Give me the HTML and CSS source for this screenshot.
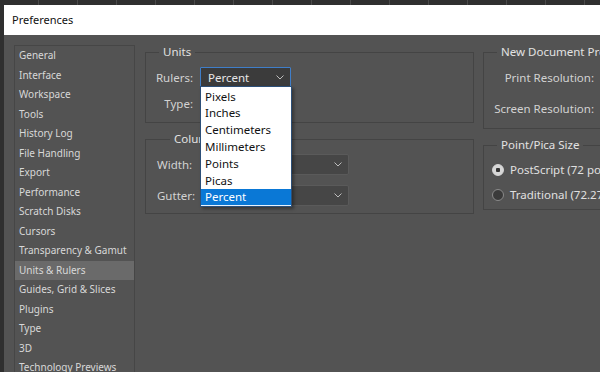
FILE: index.html
```html
<!DOCTYPE html>
<html lang="en">
<head>
  <meta charset="UTF-8">
  <title>Preferences</title>
  <link rel="stylesheet" href="styles.css">
</head>
<body>
  <div class="window">
    <div class="titlebar">Preferences</div>
    <div class="content">
      <ul class="sidebar">
        <li>General</li>
        <li>Interface</li>
        <li>Workspace</li>
        <li>Tools</li>
        <li>History Log</li>
        <li>File Handling</li>
        <li>Export</li>
        <li>Performance</li>
        <li>Scratch Disks</li>
        <li>Cursors</li>
        <li>Transparency &amp; Gamut</li>
        <li class="active">Units &amp; Rulers</li>
        <li>Guides, Grid &amp; Slices</li>
        <li>Plugins</li>
        <li>Type</li>
        <li>3D</li>
        <li>Technology Previews</li>
      </ul>

      <div class="main">
        <div class="col col-left">
          <fieldset class="group units">
            <legend>Units</legend>
            <div class="row">
              <label>Rulers:</label>
              <div class="select focus wide">
                <span>Percent</span>
                <svg class="chev" width="8" height="5" viewBox="0 0 8 5"><polyline points="0.5,0.5 4,4 7.5,0.5" fill="none" stroke="#bdbdbd" stroke-width="1"/></svg>
                <ul class="dropdown">
                  <li>Pixels</li>
                  <li>Inches</li>
                  <li>Centimeters</li>
                  <li>Millimeters</li>
                  <li>Points</li>
                  <li>Picas</li>
                  <li class="hl">Percent</li>
                </ul>
              </div>
            </div>
            <div class="row">
              <label>Type:</label>
              <div class="select wide">
                <span>Points</span>
                <svg class="chev" width="8" height="5" viewBox="0 0 8 5"><polyline points="0.5,0.5 4,4 7.5,0.5" fill="none" stroke="#bdbdbd" stroke-width="1"/></svg>
              </div>
            </div>
          </fieldset>

          <fieldset class="group columns">
            <legend>Column Size</legend>
            <div class="row">
              <label>Width:</label>
              <div class="input">180</div>
              <div class="select unit">
                <span>Points</span>
                <svg class="chev" width="8" height="5" viewBox="0 0 8 5"><polyline points="0.5,0.5 4,4 7.5,0.5" fill="none" stroke="#bdbdbd" stroke-width="1"/></svg>
              </div>
            </div>
            <div class="row">
              <label>Gutter:</label>
              <div class="input">12</div>
              <div class="select unit">
                <span>Points</span>
                <svg class="chev" width="8" height="5" viewBox="0 0 8 5"><polyline points="0.5,0.5 4,4 7.5,0.5" fill="none" stroke="#bdbdbd" stroke-width="1"/></svg>
              </div>
            </div>
          </fieldset>
        </div>

        <div class="col col-right">
          <fieldset class="group preset">
            <legend>New Document Preset Resolutions</legend>
            <div class="row">
              <label>Print Resolution:</label>
              <div class="input">300</div>
            </div>
            <div class="row">
              <label>Screen Resolution:</label>
              <div class="input">72</div>
            </div>
          </fieldset>

          <fieldset class="group pica">
            <legend>Point/Pica Size</legend>
            <div class="radio-row">
              <span class="radio checked"></span>
              <span>PostScript (72 points/inch)</span>
            </div>
            <div class="radio-row">
              <span class="radio"></span>
              <span>Traditional (72.27 points/inch)</span>
            </div>
          </fieldset>
        </div>
      </div>
    </div>
  </div>
</body>
</html>
```

FILE: styles.css
```css
html, body {
  margin: 0;
  height: 100%;
  overflow: hidden;
}

body {
  background-color: #2f2f2f;
  background-image: repeating-linear-gradient(90deg, transparent 0 38px, #4a4a4a 38px 39px);
  background-size: 100% 5px;
  background-repeat: no-repeat;
  padding: 5px 0 0 4px;
  box-sizing: border-box;
  font-family: "Noto Sans", "Open Sans", sans-serif;
}

.window {
  height: 100%;
  background-color: #535353;
  display: flex;
  flex-direction: column;
}

.titlebar {
  height: 30px;
  flex: none;
  background-color: #fff;
  color: #111;
  font-size: 11px;
  line-height: 30px;
  padding-left: 8px;
}

.content {
  flex: 1;
  display: flex;
  padding: 10px 0 0 10px;
  min-height: 0;
}

/* category list */
.sidebar {
  list-style: none;
  margin: 0;
  padding: 0;
  width: 119px;
  flex: none;
  border: 1px solid #464646;
  border-bottom: none;
  font-size: 10px;
  color: #d8d8d8;
}

.sidebar li {
  height: 19.5px;
  line-height: 19.5px;
  padding-left: 4px;
  white-space: nowrap;
}

.sidebar li.active {
  background-color: #6a6a6a;
}

.main {
  display: flex;
  gap: 9px;
  margin-left: 10px;
  color: #d2d2d2;
  font-size: 11.5px;
}

.col {
  display: flex;
  flex-direction: column;
  gap: 9px;
}

.col-left {
  width: 329px;
  flex: none;
}

.col-right {
  width: 250px;
  flex: none;
}

.group {
  margin: 0;
  padding: 0;
  border: 1px solid #444;
  min-width: 0;
}

.group legend {
  margin-left: 13px;
  padding: 0 4px;
  line-height: 14px;
  font-size: 11.5px;
  color: #e2e2e2;
  white-space: nowrap;
}

.row {
  display: flex;
  align-items: center;
  height: 20px;
}

.row label {
  flex: none;
}

/* units */
.units {
  padding: 8px 0 9px;
  display: flex;
  flex-direction: column;
  gap: 6px;
}

.units .row label {
  width: 47px;
  text-align: right;
  margin-right: 7px;
}

/* column size */
.columns {
  padding: 8px 0 7px 11px;
  display: flex;
  flex-direction: column;
  gap: 10px;
}

.columns .row {
  height: 21px;
}

.columns .row label {
  width: 43px;
}

.select {
  position: relative;
  height: 100%;
  box-sizing: border-box;
  display: flex;
  align-items: center;
  justify-content: space-between;
  padding: 0 6px 0 7px;
  background-color: #464646;
  border: 1px solid #5a5a5a;
  border-radius: 2px;
  color: #e6e6e6;
}

.select.wide {
  width: 91px;
}

.select.unit {
  width: 99px;
  margin-left: 5px;
}

.select.focus {
  background-color: #3b3b3b;
  border-color: #3f7ec9;
  border-radius: 1px;
}

.chev {
  flex: none;
}

.input {
  width: 45px;
  height: 100%;
  box-sizing: border-box;
  background-color: #454545;
  border: 1px solid #5a5a5a;
  padding: 0 5px;
  line-height: 19px;
  color: #e6e6e6;
}

/* open dropdown list over the form */
.dropdown {
  position: absolute;
  top: 100%;
  left: -1px;
  z-index: 5;
  width: 92px;
  box-sizing: border-box;
  list-style: none;
  margin: 0;
  padding: 0;
  background-color: #fff;
  border: 1px solid #2c4f78;
  box-shadow: 2px 2px 3px rgba(0, 0, 0, 0.35);
  color: #111;
  font-size: 11.5px;
}

.dropdown li {
  height: 17px;
  line-height: 17px;
  padding-left: 4px;
}

.dropdown li:first-child {
  line-height: 19px;
}

.dropdown li.hl {
  background-color: #0a78d6;
  color: #fff;
  border-bottom: 1px solid #e8f2fc;
  height: 16px;
  line-height: 16px;
}

/* right column */
.preset {
  padding: 8px 0 10px;
  display: flex;
  flex-direction: column;
  gap: 11px;
}

.preset .row label {
  width: 110px;
  text-align: right;
  margin-right: 8px;
}

.pica {
  padding: 8px 0 5px;
  display: flex;
  flex-direction: column;
  gap: 6px;
}

.radio-row {
  display: flex;
  align-items: center;
  gap: 6px;
  height: 19px;
  margin-left: 8px;
  white-space: nowrap;
  color: #e0e0e0;
}

.radio {
  width: 10px;
  height: 10px;
  border-radius: 50%;
  border: 1px solid #8a8a8a;
  background-color: #3a3a3a;
  flex: none;
}

.radio.checked {
  background: radial-gradient(circle, #333 0 2px, #d6d6d6 2.5px);
  border-color: #d6d6d6;
}
```
